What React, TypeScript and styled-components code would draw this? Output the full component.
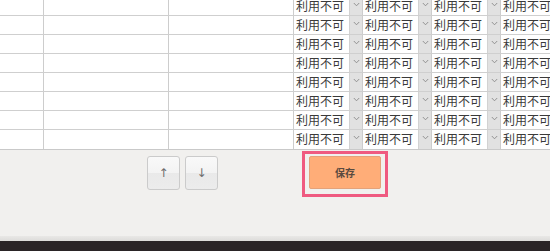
import React from 'react'
import styled, { createGlobalStyle } from 'styled-components'

const GlobalStyle = createGlobalStyle`
  html, body {
    margin: 0;
    padding: 0;
    background: #f0efed;
    font-family: "Noto Sans CJK JP", "Noto Sans", sans-serif;
  }
  * {
    box-sizing: border-box;
  }
`

const ROWS = 8
const SELECT_COLS = 4

export default function App() {
  return (
    <Page>
      <GlobalStyle />
      <TableViewport>
        {Array.from({ length: ROWS }).map((_, r) => (
          <Row key={r}>
            <Cell $w={44} />
            <Cell $w={125} />
            <Cell $w={125} />
            {Array.from({ length: SELECT_COLS }).map((__, c) => (
              <Cell $w={69} key={c}>
                <Select>
                  <SelectText>利用不可</SelectText>
                  <SelectArrow>
                    <svg width="7" height="5" viewBox="0 0 7 5">
                      <path d="M0.8 1 L3.5 3.8 L6.2 1" fill="none" stroke="#8a8a8a" strokeWidth="0.9" />
                    </svg>
                  </SelectArrow>
                </Select>
              </Cell>
            ))}
          </Row>
        ))}
      </TableViewport>
      <Footer>
        <MoveGroup>
          <MoveBtn>↑</MoveBtn>
          <MoveBtn>↓</MoveBtn>
        </MoveGroup>
        <Highlight>
          <SaveBtn>保存</SaveBtn>
        </Highlight>
      </Footer>
      <FooterEdge />
      <BottomBar />
    </Page>
  )
}

const Page = styled.div`
  width: 550px;
  height: 251px;
  display: flex;
  flex-direction: column;
  overflow: hidden;
  background: #f1f0ee;
`

const TableViewport = styled.div`
  height: 150px;
  flex: none;
  display: flex;
  flex-direction: column;
  justify-content: flex-end;
  overflow: hidden;
  background: #ffffff;
  border-bottom: 1px solid #c9c9c9;
`

const Row = styled.div`
  display: flex;
  flex: none;
  height: 19px;
  border-bottom: 1px solid #cfcfcf;
  &:last-child {
    border-bottom: none;
  }
`

const Cell = styled.div<{ $w: number }>`
  flex: none;
  width: ${(p) => p.$w}px;
  height: 100%;
  border-right: 1px solid #cdcdcd;
  background: #ffffff;
  overflow: hidden;
`

const Select = styled.div`
  display: flex;
  align-items: stretch;
  height: 100%;
`

const SelectText = styled.div`
  flex: 1;
  padding: 2px 0 0 2px;
  font-size: 12px;
  line-height: 14px;
  color: #3a3a3a;
  white-space: nowrap;
`

const SelectArrow = styled.div`
  width: 13px;
  flex: none;
  display: flex;
  justify-content: center;
  padding-top: 5px;
  background: #e1e1e1;
  border-left: 1px solid #d2d2d2;
`

const Footer = styled.div`
  height: 86px;
  flex: none;
  display: flex;
  align-items: flex-start;
  padding: 6px 0 0 147px;
  gap: 84px;
`

const MoveGroup = styled.div`
  display: flex;
  gap: 5px;
`

const MoveBtn = styled.div`
  width: 33px;
  height: 34px;
  border: 1px solid #cbcbcb;
  border-radius: 3px;
  background: linear-gradient(#f9f9f9 0%, #f3f3f3 50%, #e9e9e9 51%, #ececec 100%);
  color: #6d6d6d;
  font-family: "DejaVu Sans", sans-serif;
  font-size: 12px;
  display: flex;
  align-items: center;
  justify-content: center;
`

const Highlight = styled.div`
  margin-top: -5px;
  padding: 2px 4px 5px 4px;
  border: 3px solid #ef5a80;
`

const SaveBtn = styled.div`
  width: 72px;
  height: 33px;
  border: 1px solid #e4a27a;
  border-radius: 2px;
  background: #ffad78;
  color: #5a4a40;
  font-size: 10px;
  font-weight: 700;
  display: flex;
  align-items: center;
  justify-content: center;
`

const FooterEdge = styled.div`
  height: 5px;
  flex: none;
  background: linear-gradient(#e9e8e6, #dcdbd9);
`

const BottomBar = styled.div`
  flex: 1;
  background: #2a2426;
`
